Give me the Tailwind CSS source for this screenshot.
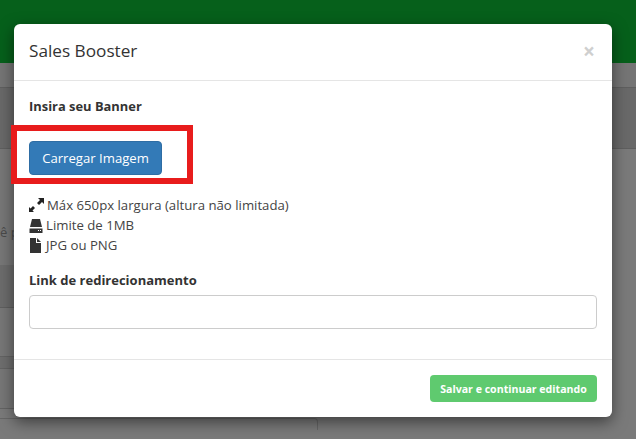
<!DOCTYPE html>
<html lang="pt-BR">
<head>
    <meta charset="UTF-8">
    <title>Sales Booster</title>
    <script src="https://cdn.jsdelivr.net/npm/@tailwindcss/browser@4"></script>
</head>
<body class="relative w-[636px] h-[439px] overflow-hidden bg-[#7a7a7a] font-['Open_Sans',sans-serif] text-[#333]">

    <!-- Pagina atras do backdrop -->
    <div class="h-[63px] bg-[#06601b]"></div>
    <div class="flex h-[376px]">
        <div class="w-[348px] shrink-0">
            <div class="h-[24px] bg-[#757575]"></div>
            <div class="h-[62px] bg-[#696969] border-y border-[#5f5f5f]"></div>
            <div class="h-[116px] bg-[#777] text-[13px] leading-[20px] text-[#4a4a4a] pt-[73px]">ê p</div>
            <div class="h-[43px] bg-[#6c6c6c] border-b border-[#5f5f5f]"></div>
            <div class="h-[49px] bg-[#777] border-b border-[#636363]"></div>
            <div class="h-[12px] bg-[#6e6e6e] border-b border-[#636363]"></div>
            <div class="h-[40px] w-[317px] bg-[#777] border-r border-b border-[#636363] rounded-br-[4px]"></div>
            <div class="mt-[9px] h-[12px] w-[318px] bg-[#7a7a7a] border-t border-r border-[#666] rounded-tr-[4px]"></div>
        </div>
        <div class="flex-1 flex flex-col">
            <div class="h-[24px] bg-[#757575]"></div>
            <div class="h-[62px] bg-[#696969] border-y border-[#5f5f5f]"></div>
            <div class="flex-1 bg-[#7a7a7a]"></div>
        </div>
    </div>

    <!-- Modal -->
    <div class="absolute left-[14px] top-[24px] w-[598px] h-[393px] bg-white rounded-[6px] shadow-[0_5px_15px_rgba(0,0,0,0.5)] flex flex-col">
        <div class="h-[57px] shrink-0 border-b border-[#e5e5e5] pl-[15px] pr-[15px] pb-[2px] flex items-center justify-between">
            <h4 class="text-[17.2px] leading-[20px] font-medium text-[#333]">Sales Booster</h4>
            <span class="text-[21px] leading-none font-bold text-[#cfcfcf] mr-[2px]">×</span>
        </div>
        <div class="flex-1 px-[15px] pt-[16px]">
            <p class="text-[12.9px] leading-[18px] font-bold">Insira seu Banner</p>
            <button class="mt-[26px] block w-[133px] h-[34px] bg-[#337ab7] border border-[#2e6da4] rounded-[4px] text-white text-[13.15px] leading-[20px]">Carregar Imagem</button>
            <ul class="mt-[20px] text-[13.2px] leading-[20px] text-[#444]">
                <li class="flex items-center gap-[3px]">
                    <svg class="w-[15px] h-[14px] shrink-0" viewBox="0 0 15 14" fill="#222"><path d="M9 0h6v6l-2-2-3 3-2-2 3-3zM0 14V9l1.5 1.5L4 8l2 2-2.5 2.5L5 14z"/></svg>
                    <span>Máx 650px largura (altura não limitada)</span>
                </li>
                <li class="flex items-center gap-[3px]">
                    <svg class="w-[14px] h-[15px] shrink-0" viewBox="0 0 14 15" fill="#333"><path d="M3 1h8l2 8H1zM0.5 10.5h13V15H0.5z"/><path d="M9 12h1v1H9zM11 12h1v1h-1z" fill="#fff"/></svg>
                    <span>Limite de 1MB</span>
                </li>
                <li class="flex items-center gap-[3px]">
                    <svg class="w-[14px] h-[15px] shrink-0" viewBox="0 0 14 15" fill="#333"><path d="M1 0h6v5h5v10H1zM8 0l4 4H8z"/></svg>
                    <span>JPG ou PNG</span>
                </li>
            </ul>
            <label class="mt-[16px] block text-[13px] leading-[18px] font-bold">Link de redirecionamento</label>
            <input type="text" class="mt-[6px] block w-full h-[34px] border border-[#ccc] rounded-[4px] bg-white">
        </div>
        <div class="h-[58px] shrink-0 border-t border-[#e5e5e5] px-[15px] flex items-start justify-end pt-[15px]">
            <button class="w-[167px] h-[27px] bg-[#5fca6f] rounded-[4px] text-white text-[10.6px] leading-[18px] font-bold">Salvar e continuar editando</button>
        </div>
    </div>

    <!-- Marcacao vermelha -->
    <div class="absolute left-[11px] top-[125px] w-[182px] h-[59px] border-[6px] border-[#e81c1c]"></div>

</body>
</html>
